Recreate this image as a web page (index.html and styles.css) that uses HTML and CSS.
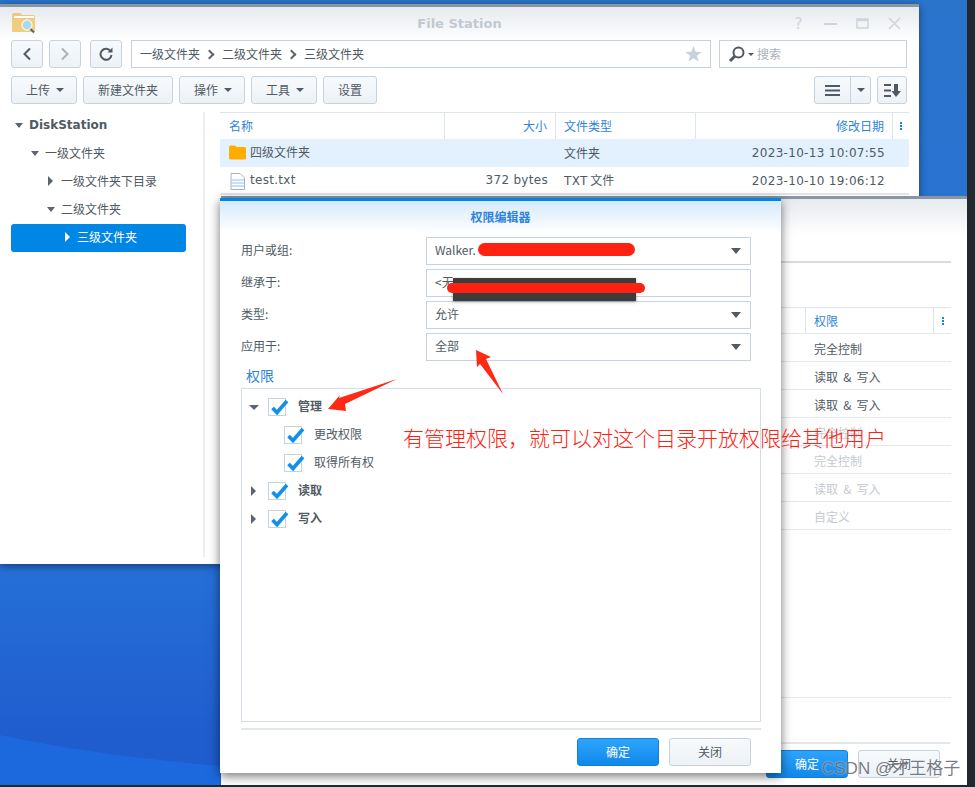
FILE: index.html
```html
<!DOCTYPE html>
<html lang="en">

<head>
    <meta charset="UTF-8">
    <meta name="viewport" content="width=device-width, initial-scale=1.0">
    <title>File Station</title>
    <link rel="stylesheet" href="styles.css">
</head>

<body>
    <div class="desktop">
        <!-- 壁纸弧线 -->
        <svg class="wave" width="967" height="785" viewBox="0 0 967 785">
            <path d="M0 735 C70 750 150 760 220 766 L220 785 L0 785 Z" fill="#1b69dd"/>
        </svg>

        <!-- File Station 主窗口 -->
        <div class="win file-win">
            <div class="win-head">
                <svg class="app-icon" width="25" height="23" viewBox="0 0 25 23">
                    <path d="M1 3 Q1 1 3 1 L9 1 L11 3 L22 3 Q24 3 24 5 L24 19 Q24 20 22 20 L2 20 Q1 20 1 19 Z" fill="#eec77c"/>
                    <rect x="3" y="4" width="20" height="2" fill="#fff"/>
                    <path d="M1 7 L24 7 L24 19 Q24 20 22 20 L2 20 Q1 20 1 19 Z" fill="#f3cd7f"/>
                    <circle cx="16" cy="13" r="5" fill="#a6dcf3" stroke="#f7f2e2" stroke-width="1.5"/>
                    <path d="M19.5 17 L23 20.500" stroke="#5b6570" stroke-width="2"/>
                </svg>
                <span class="win-title">File Station</span>
                <div class="win-ctrl">
                    <span class="ctrl-help">?</span>
                    <svg width="13" height="13" viewBox="0 0 13 13"><rect x="0" y="6" width="13" height="2" fill="#cdd4db"/></svg>
                    <svg width="13" height="13" viewBox="0 0 13 13"><path d="M1 2 H12 V11 H1 Z M1 3.500 H12" fill="none" stroke="#cdd4db" stroke-width="1.500"/></svg>
                    <svg width="13" height="13" viewBox="0 0 13 13"><path d="M1 1 L12 12 M12 1 L1 12" stroke="#cdd4db" stroke-width="1.500"/></svg>
                </div>
            </div>

            <div class="nav-row">
                <button class="btn icon-btn">
                    <svg width="10" height="14" viewBox="0 0 10 14"><path d="M8 1.500 L2.500 7 L8 12.500" fill="none" stroke="#505a64" stroke-width="2"/></svg>
                </button>
                <button class="btn icon-btn">
                    <svg width="10" height="14" viewBox="0 0 10 14"><path d="M2 1.500 L7.500 7 L2 12.500" fill="none" stroke="#a9b1ba" stroke-width="2"/></svg>
                </button>
                <button class="btn icon-btn reload">
                    <svg width="14" height="14" viewBox="0 0 14 14"><path d="M11.500 4 A5.500 5.500 0 1 0 12.500 8" fill="none" stroke="#505a64" stroke-width="2"/><path d="M8.500 5.500 L13.500 5.500 L13.500 0.500 Z" fill="#505a64"/></svg>
                </button>
                <div class="path-box">
                    <span>一级文件夹</span><i class="crumb"></i><span>二级文件夹</span><i class="crumb"></i><span>三级文件夹</span>
                    <svg class="star" width="17" height="16" viewBox="0 0 17 16"><path d="M8.500 0 L10.600 5.700 L16.800 5.900 L11.900 9.700 L13.600 15.600 L8.500 12.200 L3.400 15.600 L5.100 9.700 L0.200 5.900 L6.400 5.700 Z" fill="#c9d2dc"/></svg>
                </div>
                <div class="search-box">
                    <svg width="17" height="17" viewBox="0 0 17 17"><circle cx="10.500" cy="6.500" r="5" fill="none" stroke="#505a64" stroke-width="2"/><path d="M7 10 L2 15" stroke="#505a64" stroke-width="3"/></svg>
                    <i class="caret"></i>
                    <span>搜索</span>
                </div>
            </div>

            <div class="tool-row">
                <button class="btn tool-btn has-caret">上传<i class="caret"></i></button>
                <button class="btn tool-btn">新建文件夹</button>
                <button class="btn tool-btn has-caret">操作<i class="caret"></i></button>
                <button class="btn tool-btn has-caret">工具<i class="caret"></i></button>
                <button class="btn tool-btn">设置</button>
                <div class="split-btn">
                    <span class="split-main">
                        <svg width="15" height="11" viewBox="0 0 15 11"><path d="M0 1 H15 M0 5.500 H15 M0 10 H15" stroke="#505a64" stroke-width="2"/></svg>
                    </span>
                    <span class="split-arrow"><i class="caret"></i></span>
                </div>
                <button class="btn sort-btn">
                    <svg width="17" height="13" viewBox="0 0 17 13"><path d="M0 1 H7 M0 6.500 H7 M0 12 H7" stroke="#505a64" stroke-width="2"/><path d="M10 0 H14 V7 H17 L12 13 L7.500 7 H10 Z" fill="#505a64"/></svg>
                </button>
            </div>

            <div class="file-main">
                <ul class="tree-side">
                    <li class="side-root"><i class="tri-down"></i>DiskStation</li>
                    <li class="lv1"><i class="tri-down"></i>一级文件夹</li>
                    <li class="lv2 closed"><i class="tri-right"></i>一级文件夹下目录</li>
                    <li class="lv2"><i class="tri-down"></i>二级文件夹</li>
                    <li class="lv3 current"><i class="tri-right"></i>三级文件夹</li>
                </ul>
                <div class="file-list">
                    <div class="file-row file-head">
                        <span>名称</span>
                        <span class="right">大小</span>
                        <span>文件类型</span>
                        <span class="right">修改日期</span>
                        <span class="dots"><i></i><i></i><i></i></span>
                    </div>
                    <div class="file-row selected">
                        <span class="name-cell">
                            <svg width="17" height="15" viewBox="0 0 17 15"><path d="M0 2 Q0 0.500 1.500 0.500 L6 0.500 L7.500 2 L15.500 2 Q17 2 17 3.500 L17 13 Q17 14.500 15.500 14.500 L1.500 14.500 Q0 14.500 0 13 Z" fill="#ffae00"/></svg>
                            <span class="name-up">四级文件夹</span>
                        </span>
                        <span></span>
                        <span>文件夹</span>
                        <span class="right num">2023-10-13 10:07:55</span>
                        <span></span>
                    </div>
                    <div class="file-row">
                        <span class="name-cell">
                            <svg width="17" height="17" viewBox="0 0 17 17"><path d="M2 0.500 H11 L15.500 5 V16.500 H2 Z" fill="#fff" stroke="#aab2ba"/><path d="M2.500 7 H15 M2.500 10 H15 M2.500 13 H15" stroke="#8cc3ec"/></svg>
                            <span class="num name-up">test.txt</span>
                        </span>
                        <span class="right num name-up">372 bytes</span>
                        <span><span class="num">TXT</span> 文件</span>
                        <span class="right num">2023-10-10 19:06:12</span>
                        <span></span>
                    </div>
                </div>
            </div>
        </div>

        <!-- 后面的属性窗口 -->
        <div class="win back-win">
            <div class="back-head"></div>
            <div class="perm-list">
                <div class="perm-row perm-top"><span></span><span class="perm-name">权限</span><span class="dots"><i></i><i></i><i></i></span></div>
                <div class="perm-row"><span></span><span>完全控制</span><span></span></div>
                <div class="perm-row"><span></span><span>读取 &amp; 写入</span><span></span></div>
                <div class="perm-row"><span></span><span>读取 &amp; 写入</span><span></span></div>
                <div class="perm-row muted"><span></span><span>完全控制</span><span></span></div>
                <div class="perm-row muted"><span></span><span>完全控制</span><span></span></div>
                <div class="perm-row muted"><span></span><span>读取 &amp; 写入</span><span></span></div>
                <div class="perm-row muted"><span></span><span>自定义</span><span></span></div>
            </div>
            <div class="back-foot">
                <button class="btn-blue">确定</button>
                <button class="btn btn-plain">关闭</button>
            </div>
        </div>

        <!-- 权限编辑器 -->
        <div class="win dialog">
            <div class="dialog-head">权限编辑器</div>
            <div class="form">
                <div class="form-row"><label>用户或组:</label><div class="field"><span>Walker.</span><i class="caret-big"></i></div></div>
                <div class="form-row"><label>继承于:</label><div class="field"><span>&lt;无</span></div></div>
                <div class="form-row"><label>类型:</label><div class="field"><span>允许</span><i class="caret-big"></i></div></div>
                <div class="form-row"><label>应用于:</label><div class="field"><span>全部</span><i class="caret-big"></i></div></div>
            </div>
            <div class="section-title">权限</div>
            <div class="perm-tree">
                <div class="tree-row"><i class="tri-down"></i><span class="check"><svg width="18" height="18" viewBox="0 0 18 18"><path d="M4.500 10 L9 14.500 L19 3" fill="none" stroke="#0f8fee" stroke-width="3.600"/></svg></span><b>管理</b></div>
                <div class="tree-row child"><span class="check"><svg width="18" height="18" viewBox="0 0 18 18"><path d="M4.500 10 L9 14.500 L19 3" fill="none" stroke="#0f8fee" stroke-width="3.600"/></svg></span><em>更改权限</em></div>
                <div class="tree-row child"><span class="check"><svg width="18" height="18" viewBox="0 0 18 18"><path d="M4.500 10 L9 14.500 L19 3" fill="none" stroke="#0f8fee" stroke-width="3.600"/></svg></span><em>取得所有权</em></div>
                <div class="tree-row"><i class="tri-right"></i><span class="check"><svg width="18" height="18" viewBox="0 0 18 18"><path d="M4.500 10 L9 14.500 L19 3" fill="none" stroke="#0f8fee" stroke-width="3.600"/></svg></span><b>读取</b></div>
                <div class="tree-row"><i class="tri-right"></i><span class="check"><svg width="18" height="18" viewBox="0 0 18 18"><path d="M4.500 10 L9 14.500 L19 3" fill="none" stroke="#0f8fee" stroke-width="3.600"/></svg></span><b>写入</b></div>
            </div>
            <div class="dialog-rule"></div>
            <div class="dialog-foot">
                <button class="btn-blue">确定</button>
                <button class="btn btn-plain">关闭</button>
            </div>
        </div>

        <!-- 截图上的涂抹和标注 -->
        <div class="scrub-dark"></div>
        <div class="scrub scrub-a"></div>
        <div class="scrub scrub-b"></div>
        <svg class="arrows" width="967" height="785" viewBox="0 0 967 785">
            <path d="M328 409 L340 395 L339 398 L397 379 L345 404 L346 411 Z" fill="#ff2a14"/>
            <path d="M476 350 L491 357 L486 359 L503 394 L480 364 L477 367 Z" fill="#ff2a14"/>
        </svg>
        <div class="note">有管理权限，就可以对这个目录开放权限给其他用户</div>
        <div class="watermark">CSDN @才王格子</div>
    </div>
</body>

</html>
```

FILE: styles.css
```css
* {
    box-sizing: border-box;
}
body {
    margin: 0;
    width: 975px;
    height: 787px;
    overflow: hidden;
    background-color: #23282f;
    font: 12px/1.2 "Noto Sans CJK SC", sans-serif;
    color: #505a64;
}
i {
    display: block;
    font-style: normal;
}
em {
    font-style: normal;
}
button {
    font: inherit;
    color: inherit;
    padding: 0;
}
ul {
    margin: 0;
    padding: 0;
    list-style: none;
}
.desktop {
    position: relative;
    width: 967px;
    height: 785px;
    overflow: hidden;
    background: linear-gradient(#2b74cc 0, #2670d8 560px, #1f5ccd 740px);
}
.wave,
.arrows {
    position: absolute;
    left: 0;
    top: 0;
}
.win {
    position: absolute;
    background-color: #fff;
    box-shadow: 0 2px 8px rgba(0, 0, 0, .45);
}

/* 公共按钮 */
.btn {
    display: flex;
    align-items: center;
    justify-content: center;
    height: 28px;
    border: 1px solid #c6d2de;
    border-radius: 3px;
    background: linear-gradient(#f7fafc, #edf2f7);
}
.btn-blue {
    width: 82px;
    height: 28px;
    border: 1px solid #1680d8;
    border-radius: 3px;
    background: linear-gradient(#2ea4fb, #1088ea);
    color: #fff;
}
.btn-plain {
    width: 82px;
}
.caret {
    width: 0;
    height: 0;
    border: 4px solid transparent;
    border-top-color: #505a64;
    border-bottom: 0;
}
.tri-down,
.tri-right {
    width: 0;
    height: 0;
    border-style: solid;
    border-color: transparent;
}
.tri-down {
    border-width: 5px 5px 0;
    border-top-color: #5b6570;
}
.tri-right {
    border-width: 5px 0 5px 5px;
    border-left-color: #5b6570;
}
.dots {
    display: flex;
    flex-direction: column;
    align-items: center;
    justify-content: center;
    gap: 1px;
}
.dots i {
    width: 2px;
    height: 2px;
    background-color: #0a86e6;
}

/* File Station 窗口 */
.file-win {
    left: 0;
    top: 4px;
    width: 919px;
    height: 560px;
    border-top: 3px solid #8b96a3;
}
.win-head {
    display: flex;
    align-items: center;
    height: 33px;
    padding-left: 11px;
    background: linear-gradient(#e6e9ee, #fff);
}
.win-title {
    flex: 1;
    padding-left: 91px;
    text-align: center;
    font: bold 13px "DejaVu Sans", sans-serif;
    color: #c3c9d0;
}
.win-ctrl {
    display: flex;
    align-items: center;
    gap: 19px;
    padding-right: 18px;
}
.ctrl-help {
    width: 13px;
    font: 15px "DejaVu Sans", sans-serif;
    color: #cdd4db;
    text-align: center;
}
.nav-row,
.tool-row {
    display: flex;
    height: 28px;
    padding: 0 12px 0 11px;
}
.icon-btn {
    width: 32px;
    margin-right: 6px;
}
.reload {
    margin-left: 3px;
    margin-right: 9px;
}
.path-box {
    display: flex;
    align-items: center;
    width: 580px;
    padding: 0 8px;
    border: 1px solid #c6d2de;
}
.crumb {
    width: 7px;
    height: 7px;
    margin: 0 9px 0 6px;
    border-top: 2px solid #5b6570;
    border-right: 2px solid #5b6570;
    transform: rotate(45deg);
}
.star {
    margin-left: auto;
}
.search-box {
    display: flex;
    align-items: center;
    gap: 3px;
    width: 188px;
    margin-left: 8px;
    padding-left: 8px;
    border: 1px solid #c6d2de;
    color: #a9b1ba;
}
.search-box .caret {
    border-width: 3px;
    border-bottom: 0;
}
.tool-row {
    margin-top: 8px;
    gap: 6px;
}
.tool-btn {
    gap: 6px;
    padding: 0 14px;
}
.has-caret {
    padding-right: 12px;
}
.split-btn {
    display: flex;
    width: 57px;
    height: 28px;
    margin-left: auto;
    border: 1px solid #c6d2de;
    border-radius: 3px;
    background: linear-gradient(#f7fafc, #edf2f7);
}
.split-main {
    display: flex;
    align-items: center;
    justify-content: center;
    width: 36px;
    border-right: 1px solid #c6d2de;
}
.split-arrow {
    display: flex;
    align-items: center;
    justify-content: center;
    flex: 1;
}
.sort-btn {
    width: 30px;
}
.file-main {
    display: flex;
    margin-top: 8px;
    height: 445px;
}
.tree-side {
    width: 205px;
    padding-left: 11px;
    padding-right: 17px;
    border-right: 2px solid #eceef0;
}
.tree-side li {
    display: flex;
    align-items: center;
    gap: 6px;
    height: 28px;
    padding-bottom: 2px;
}
.tree-side .tri-down {
    border-width: 5px 4px 0;
}
.side-root {
    padding-left: 4px;
    font: bold 12px "DejaVu Sans", sans-serif;
    color: #505a64;
}
.lv1 {
    padding-left: 20px;
}
.lv2 {
    padding-left: 36px;
}
.tree-side .closed {
    padding-left: 37px;
    gap: 8px;
}
.tree-side .lv3 {
    padding-left: 54px;
    gap: 7px;
}
.current {
    border-radius: 3px;
    background-color: #0086e5;
    color: #fff;
}
.current .tri-right {
    border-left-color: #fff;
}
.file-list {
    width: 689px;
    margin-left: 15px;
    height: 83px;
    border-bottom: 2px solid #e2e5e8;
}
.file-row {
    display: grid;
    grid-template-columns: 225px 111px 140px 197px 16px;
    align-items: center;
    height: 28px;
}
.file-row > span {
    padding: 0 8px;
    white-space: nowrap;
}
.file-row > .right {
    text-align: right;
}
.file-row > .dots {
    padding: 0;
}
.file-head {
    height: 27px;
    border-top: 1px solid #dce4ec;
    color: #2f83dc;
}
.file-head > span {
    display: flex;
    align-items: center;
    height: 100%;
    border-right: 1px solid #dce4ec;
}
.file-head > span:first-child {
    padding-left: 9px;
}
.file-head > .right {
    justify-content: flex-end;
}
.file-head > .dots {
    border-right: 0;
}
.selected {
    background-color: #e2f1fd;
}
.file-row > .name-cell {
    display: flex;
    align-items: center;
    gap: 4px;
    padding-left: 9px;
}
.name-up {
    margin-bottom: 2px;
}
.num {
    font-family: "DejaVu Sans", sans-serif;
    letter-spacing: .3px;
}

/* 后面的窗口 */
.back-win {
    display: flex;
    flex-direction: column;
    left: 221px;
    top: 196px;
    width: 746px;
    height: 589px;
    border-top: 3px solid #8b96a3;
    box-shadow: none;
    background: linear-gradient(#e6e9ee, #fff 36px);
}
.back-head {
    height: 64px;
    margin-right: 16px;
    border-bottom: 2px solid #d9dcdf;
}
.perm-list {
    height: 391px;
    margin-top: 44px;
    margin-right: 16px;
    border-bottom: 1px solid #e3e8ee;
}
.perm-row {
    display: grid;
    grid-template-columns: 1fr 128px 17px;
    align-items: center;
    height: 28px;
    padding-top: 4px;
    border-bottom: 1px solid #e3e8ee;
    word-spacing: 2.500px;
}
.perm-row > span:nth-child(2) {
    padding-left: 8px;
}
.perm-top {
    height: 27px;
    padding-top: 0;
    border-top: 1px solid #dce4ec;
}
.perm-top > span {
    height: 100%;
    border-right: 1px solid #dce4ec;
}
.perm-row > .perm-name {
    display: flex;
    align-items: center;
    padding-top: 2px;
    color: #2f83dc;
}
.perm-top > .dots {
    border-right: 0;
}
.muted {
    color: #c6cacf;
}
.back-foot {
    display: flex;
    justify-content: flex-end;
    gap: 10px;
    margin-top: 44px;
    margin-right: 17px;
    padding-top: 6px;
    padding-right: 10px;
    border-top: 2px solid #e4e7ea;
}

/* 权限编辑器 */
.dialog {
    left: 220px;
    top: 198px;
    width: 561px;
    height: 575px;
    border-top: 3px solid #0086e5;
    box-shadow: 0 3px 10px rgba(0, 0, 0, .55);
}
.dialog-head {
    height: 32px;
    line-height: 32px;
    text-align: center;
    font-weight: bold;
    color: #2f83dc;
    background: linear-gradient(#d6eafb, #fff);
}
.form {
    display: flex;
    flex-direction: column;
    gap: 4px;
    margin-top: 4px;
    padding-left: 21px;
}
.form-row {
    display: flex;
    align-items: center;
    height: 28px;
}
.form-row label {
    width: 185px;
    margin-bottom: 2px;
}
.field {
    display: flex;
    align-items: center;
    width: 325px;
    height: 28px;
    padding: 0 9px 0 8px;
    border: 1px solid #c6d2de;
}
.field span {
    margin-bottom: 2px;
}
.caret-big {
    width: 0;
    height: 0;
    margin-left: auto;
    border: 5.500px solid transparent;
    border-top: 6px solid #505a64;
    border-bottom: 0;
}
.section-title {
    height: 24px;
    margin-top: 3px;
    padding-left: 26px;
    font-size: 14px;
    line-height: 22px;
    color: #2f83dc;
}
.perm-tree {
    width: 520px;
    height: 334px;
    margin-left: 21px;
    padding-top: 4px;
    border: 1px solid #d3dee9;
}
.tree-row {
    display: flex;
    align-items: center;
    height: 28px;
    padding-left: 7px;
}
.tree-row b {
    font-weight: bold;
    margin-bottom: 2px;
}
.tree-row em {
    margin-bottom: 2px;
}
.tree-row .check {
    margin-left: 9px;
    margin-right: 12px;
}
.tree-row .tri-right {
    margin-left: 2px;
    margin-right: 3px;
}
.tree-row.child {
    padding-left: 42px;
}
.tree-row.child .check {
    margin-left: 0;
}
.check {
    display: block;
    width: 18px;
    height: 18px;
    border: 1px solid #c6d2de;
}
.check svg {
    display: block;
    margin: -1px 0 0 -1px;
    overflow: visible;
}
.dialog-rule {
    width: 520px;
    height: 2px;
    margin: 6px 0 0 21px;
    background-color: #e4e7ea;
}
.dialog-foot {
    display: flex;
    justify-content: flex-end;
    gap: 10px;
    margin-top: 8px;
    padding-right: 30px;
}

/* 标注 */
.scrub-dark {
    position: absolute;
    left: 453px;
    top: 278px;
    width: 183px;
    height: 23px;
    background-color: #3c3c3c;
    box-shadow: 0 1px 3px rgba(0, 0, 0, .35);
}
.scrub {
    position: absolute;
    border-radius: 7px;
    background-color: #ff2212;
}
.scrub-a {
    left: 478px;
    top: 243px;
    width: 157px;
    height: 13px;
}
.scrub-b {
    left: 447px;
    top: 283px;
    width: 198px;
    height: 10px;
}
.note {
    position: absolute;
    left: 403px;
    top: 423px;
    font-size: 21px;
    font-weight: 300;
    line-height: 28px;
    white-space: nowrap;
    color: #ff2212;
}
.watermark {
    position: absolute;
    left: 822px;
    top: 758px;
    font: 17px/22px "Liberation Sans", "Noto Sans CJK SC", sans-serif;
    white-space: nowrap;
    color: rgba(95, 100, 110, .85);
    text-shadow: 0 0 2px rgba(255, 255, 255, .7);
}
```
